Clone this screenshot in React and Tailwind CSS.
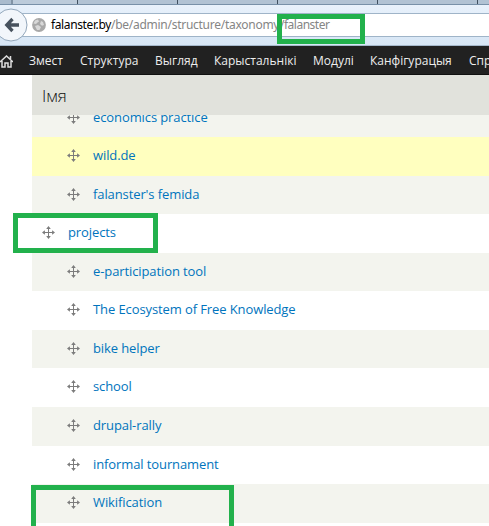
const rows = [
  { name: "economics practice", h: "h-[22px]", bg: "bg-[#f3f4ee]", clipped: true },
  { name: "wild.de", h: "h-[39px]", bg: "bg-[#ffffbf]" },
  { name: "falanster's femida", h: "h-[38px]", bg: "bg-[#f3f4ee]" },
  { name: "projects", h: "h-[39px]", bg: "bg-white", root: true },
  { name: "e-participation tool", h: "h-[38px]", bg: "bg-[#f3f4ee]" },
  { name: "The Ecosystem of Free Knowledge", h: "h-[39px]", bg: "bg-white" },
  { name: "bike helper", h: "h-[38px]", bg: "bg-[#f3f4ee]" },
  { name: "school", h: "h-[39px]", bg: "bg-white" },
  { name: "drupal-rally", h: "h-[39px]", bg: "bg-[#f3f4ee]" },
  { name: "informal tournament", h: "h-[38px]", bg: "bg-white" },
  { name: "Wikification", h: "h-[39px]", bg: "bg-[#f3f4ee]" },
];

const menu = [
  ["Змест", "w-[51px]"],
  ["Структура", "w-[75px]"],
  ["Выгляд", "w-[59px]"],
  ["Карыстальнікі", "w-[99px]"],
  ["Модулі", "w-[57px]"],
  ["Канфігурацыя", "w-[99px]"],
  ["Спр", "w-[30px]"],
];

function MoveIcon() {
  return (
    <svg className="mt-[12px] h-[13px] w-[13px] shrink-0" viewBox="0 0 13 13" fill="#7c7c7c">
      <path d="M6 1h1v5h5v1H7v5H6V7H1V6h5z" />
      <path d="M6.5 0 8.8 2.9H4.2zM6.5 13 4.2 10.1h4.6zM0 6.5 2.9 4.2v4.6zM13 6.5 10.1 8.8V4.2z" />
    </svg>
  );
}

function Browser() {
  return (
    <div className="h-[46px] bg-[#dce9f7]">
      <div className="flex h-[5px] border-b border-[#7890a8] bg-[#b1c2d3]">
        <div className="w-[13px] shrink-0 border-r-2 border-[#8193a5] bg-[#a9bbcd]" />
        <div className="w-[65px] shrink-0 border-r border-[#40505f] bg-[#bccbda]" />
        <div className="w-[100px] shrink-0 border-r border-[#40505f]" />
        <div className="w-[100px] shrink-0 border-r border-[#40505f]" />
        <div className="w-[100px] shrink-0 border-r border-[#40505f]" />
        <div className="w-[100px] shrink-0 border-r border-[#40505f]" />
      </div>
      <div className="flex h-[41px] items-start border-b border-[#a5b8cb] bg-gradient-to-b from-[#e8f1fb] to-[#d7e6f5] pt-[8px]">
        <div className="relative flex h-[24px] w-full items-center border-y border-[#9fb4c8] bg-white pl-[32px]">
          <svg className="absolute -left-[6px] -top-[6px] h-[34px] w-[34px]" viewBox="0 0 34 34">
            <circle cx="17" cy="17" r="16" fill="#f2f6fb" stroke="#93a7bb" />
            <path d="M18.5 11 12.8 17l5.7 6M13 17h12" fill="none" stroke="#47525e" strokeWidth="3.3" />
          </svg>
          <svg className="h-[14px] w-[14px] shrink-0" viewBox="0 0 14 14">
            <circle cx="7" cy="7" r="6.9" fill="#a8a8a8" />
            <path d="M3 2.5 6 1.5l1 2-1.5 1L4 6 1.5 5.5zM9 3l2 1 1 3-2 .8L8 6zM3 8l3-1 3 2-1.5 3L5 12z" fill="#d8d8d8" />
          </svg>
          <div className="flex whitespace-pre pl-[5px] font-['Noto_Sans',sans-serif] text-[12px] leading-[20px] text-[#858585]">
            <span className="w-[60px] tracking-[-0.38px] text-black">falanster.by</span>
            <span className="w-[169px] tracking-[-0.27px]">/be/admin/structure/taxonomy</span>
            <span className="tracking-[-0.5px]">/falanster</span>
          </div>
        </div>
      </div>
    </div>
  );
}

export default function App() {
  return (
    <div className="relative h-[526px] w-[489px] overflow-hidden bg-white font-['Open_Sans',sans-serif]">
      <Browser />
      <nav className="flex h-[29px] items-center overflow-hidden border-b border-[#101010] bg-[#212121] pt-[2px] text-[12px] text-[#eee]">
        <svg className="mr-[16px] h-[13px] w-[13px] shrink-0" viewBox="0 0 13 13" fill="none" stroke="#ddd" strokeWidth="1.5">
          <path d="M0 7 6.5 1 13 7M2 6v6h3V8h3v4h3V6M10.5 1v3" />
        </svg>
        {menu.map(([label, width]) => (
          <span key={label} className={`${width} shrink-0 whitespace-nowrap`}>{label}</span>
        ))}
      </nav>
      <main className="ml-[32px]">
        <div className="flex h-[40px] items-center bg-[#e1e2dc] pl-[10px] pt-[2px] text-[17px] font-light text-[#111]">Імя</div>
        {rows.map((row) => (
          <div
            key={row.name}
            className={`flex overflow-hidden ${row.h} ${row.bg} ${row.clipped ? "items-end" : "items-start"} ${row.root ? "pl-[10px]" : "pl-[35px]"}`}
          >
            <div className="flex h-[38px] shrink-0 items-start">
              <MoveIcon />
              <span className="ml-[13px] mt-[8px] whitespace-nowrap text-[13px] leading-[20px] tracking-[-0.1px] text-[#0074bd]">{row.name}</span>
            </div>
          </div>
        ))}
      </main>
      <div className="absolute left-[277px] top-[14px] h-[30px] w-[88px] border-[5px] border-[#22b14c]" />
      <div className="absolute left-[13px] top-[213px] h-[40px] w-[145px] border-[5px] border-[#22b14c]" />
      <div className="absolute left-[31px] top-[485px] h-[60px] w-[203px] border-[5px] border-[#22b14c]" />
    </div>
  );
}
